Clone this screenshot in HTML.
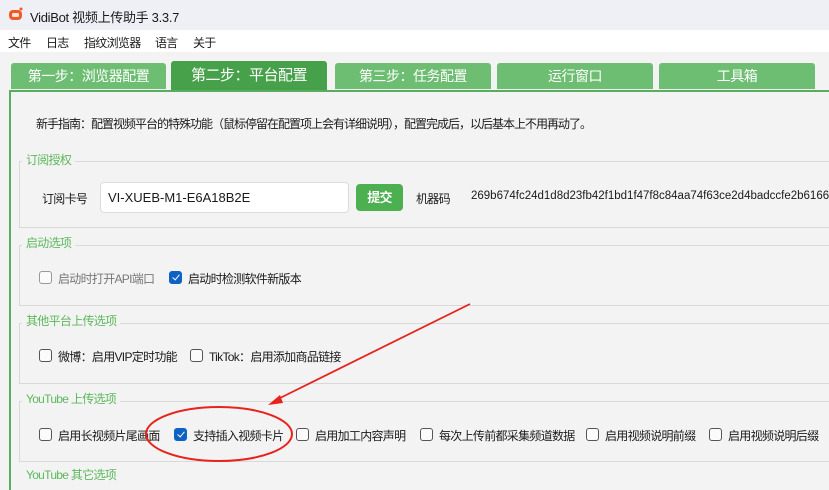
<!DOCTYPE html>
<html><head><meta charset="utf-8"><style>
*{margin:0;padding:0;box-sizing:border-box}
body{width:829px;height:473px;overflow:hidden;background:#f3f3f3;font-family:"Liberation Sans","Noto Sans CJK SC",sans-serif;font-size:12px;color:#1a1a1a;position:relative;letter-spacing:-0.7px}
.a{position:absolute;white-space:nowrap}
.title{left:0;top:0;width:829px;height:30px;background:#eef0f6}
.menu{left:0;top:30px;width:829px;height:22px;background:#fff}
.tab{position:absolute;top:63px;height:26px;background:#6dbe72;color:#fff;font-size:14px;text-align:center;line-height:26px;border-radius:3px 3px 0 0;letter-spacing:-0.5px}
.tab.on{top:61px;height:30px;line-height:30px;background:#46a14a;font-size:15px}
.panel{left:9px;top:90px;width:830px;height:400px;border-left:2px solid #5aad5e;border-top:2px solid #5aad5e}
.gl{color:#5cb85c;font-size:12px}
.box{position:absolute;left:19px;width:830px;border:1px solid #d9d9d9;border-right:none}
.cb{position:absolute;width:13px;height:13px;border:1px solid #555;border-radius:3px;background:#fbfbfb}
.cb.on{background:#0f62c4;border-color:#0f62c4}
.cb.on:after{content:"";position:absolute;left:3.5px;top:1px;width:3px;height:6px;border:solid #fff;border-width:0 1.3px 1.3px 0;transform:rotate(40deg)}
.cb.dis{border-color:#999}
</style></head><body>
<div class="a title"></div>
<svg class="a" style="left:8px;top:7px" width="16" height="14" viewBox="0 0 16 14"><rect x="1" y="3" width="13" height="10" rx="4" fill="#ee5a2a"/><rect x="4" y="6" width="7" height="4" rx="1.5" fill="#fde4d8"/><circle cx="13" cy="2" r="1.5" fill="#ee5a2a"/></svg>
<div class="a" style="left:30px;top:7px;font-size:13px;letter-spacing:-0.3px">VidiBot 视频上传助手 3.3.7</div>
<div class="a menu"></div>
<div class="a" style="left:8px;top:34px">文件</div>
<div class="a" style="left:46px;top:34px">日志</div>
<div class="a" style="left:84px;top:34px">指纹浏览器</div>
<div class="a" style="left:155px;top:34px">语言</div>
<div class="a" style="left:193px;top:34px">关于</div>

<div class="tab" style="left:11px;width:155px">第一步：浏览器配置</div>
<div class="tab on" style="left:171px;width:156px">第二步：平台配置</div>
<div class="tab" style="left:335px;width:156px">第三步：任务配置</div>
<div class="tab" style="left:497px;width:156px">运行窗口</div>
<div class="tab" style="left:659px;width:156px">工具箱</div>
<div class="a panel"></div>

<div class="a" style="left:36px;top:115px;letter-spacing:-1px">新手指南：配置视频平台的特殊功能（鼠标停留在配置项上会有详细说明），配置完成后，以后基本上不用再动了。</div>

<div class="box" style="top:161px;height:67px"></div>
<div class="a gl" style="left:22px;top:151px;background:#f3f3f3;padding:0 4px">订阅授权</div>
<div class="a" style="left:42px;top:190px">订阅卡号</div>
<div class="a" style="left:100px;top:182px;width:249px;height:31px;background:#fff;border:1px solid #dcdcdc;border-radius:4px;font-size:13px;padding:7px 7px;letter-spacing:0">VI-XUEB-M1-E6A18B2E</div>
<div class="a" style="left:356px;top:184px;width:47px;height:27px;background:#4caf50;border-radius:4px;color:#fff;font-weight:bold;font-size:13px;text-align:center;line-height:27px">提交</div>
<div class="a" style="left:416px;top:190px">机器码</div>
<div class="a" style="left:471px;top:190px;font-size:11.5px;letter-spacing:0">269b674fc24d1d8d23fb42f1bd1f47f8c84aa74f63ce2d4badccfe2b6166</div>

<div class="box" style="top:245px;height:61px"></div>
<div class="a gl" style="left:22px;top:234px;background:#f3f3f3;padding:0 4px">启动选项</div>
<div class="cb dis" style="left:39px;top:271px"></div>
<div class="a" style="left:58px;top:270px;color:#777">启动时打开API端口</div>
<div class="cb on" style="left:169px;top:271px"></div>
<div class="a" style="left:188px;top:270px">启动时检测软件新版本</div>

<div class="box" style="top:323px;height:61px"></div>
<div class="a gl" style="left:22px;top:312px;background:#f3f3f3;padding:0 4px">其他平台上传选项</div>
<div class="cb" style="left:39px;top:349px"></div>
<div class="a" style="left:58px;top:348px">微博：启用VIP定时功能</div>
<div class="cb" style="left:190px;top:349px"></div>
<div class="a" style="left:209px;top:348px">TikTok：启用添加商品链接</div>

<div class="box" style="top:401px;height:61px"></div>
<div class="a gl" style="left:22px;top:390px;background:#f3f3f3;padding:0 4px">YouTube 上传选项</div>
<div class="cb" style="left:39px;top:428px"></div>
<div class="a" style="left:58px;top:427px">启用长视频片尾画面</div>
<div class="cb on" style="left:174px;top:428px"></div>
<div class="a" style="left:193px;top:427px">支持插入视频卡片</div>
<div class="cb" style="left:296px;top:428px"></div>
<div class="a" style="left:315px;top:427px">启用加工内容声明</div>
<div class="cb" style="left:420px;top:428px"></div>
<div class="a" style="left:439px;top:427px">每次上传前都采集频道数据</div>
<div class="cb" style="left:586px;top:428px"></div>
<div class="a" style="left:605px;top:427px">启用视频说明前缀</div>
<div class="cb" style="left:709px;top:428px"></div>
<div class="a" style="left:728px;top:427px">启用视频说明后缀</div>
<div class="a gl" style="left:26px;top:466px">YouTube 其它选项</div>

<svg class="a" style="left:0;top:0" width="829" height="473">
<line x1="470" y1="304" x2="276" y2="400" stroke="#e8231c" stroke-width="1.8"/>
<polygon points="268,405 280,395 283,403" fill="#e8231c"/>
<ellipse cx="219" cy="434" rx="73" ry="27" fill="none" stroke="#e8231c" stroke-width="2"/>
</svg>
</body></html>
